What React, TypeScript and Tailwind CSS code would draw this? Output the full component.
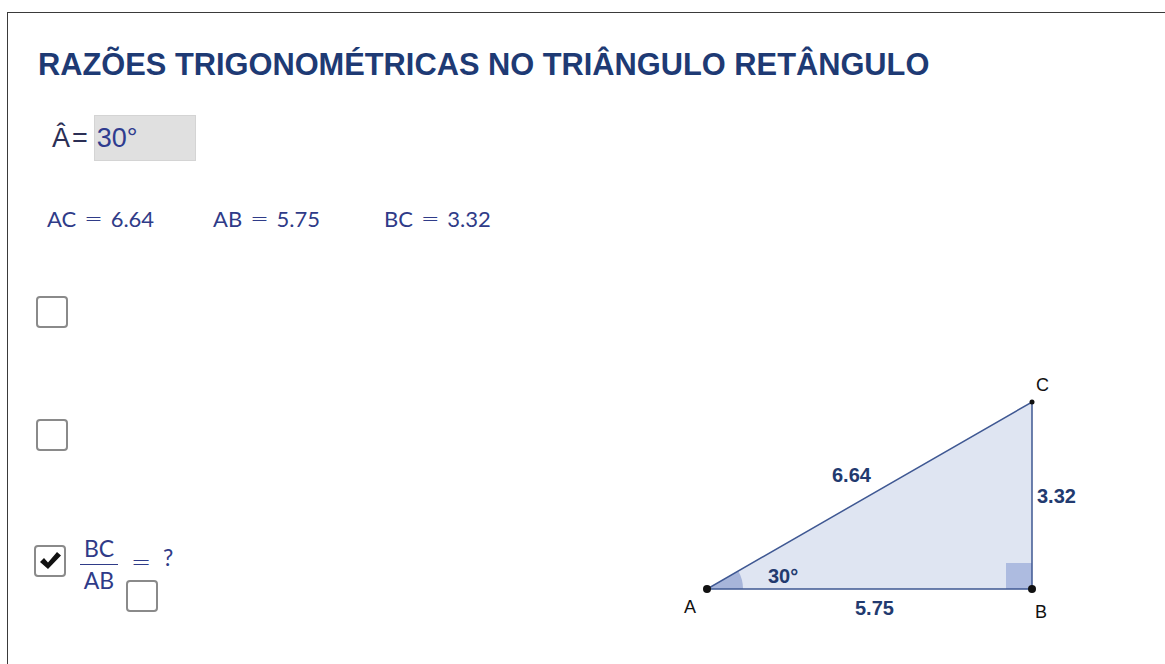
import React from "react"

const mathFont = { fontFamily: "Lato, 'Open Sans', sans-serif" }
const arial = { fontFamily: "'Liberation Sans', Arial, sans-serif" }
const eqFont = { fontFamily: "'DejaVu Sans', sans-serif", fontWeight: 300 }

function Box({ checked = false, className = "" }: { checked?: boolean; className?: string }) {
  return (
    <div
      className={
        "w-[32px] h-[32px] rounded-[4px] border-2 border-[#8a8a8a] bg-white flex items-center justify-center shrink-0 " +
        className
      }
    >
      {checked && (
        <svg width="24" height="22" viewBox="0 0 24 22">
          <path d="M2 12 L6 8 L10 12.5 L19 2 L23 5.5 L10 19 Z" fill="#111" />
        </svg>
      )}
    </div>
  )
}

function Pair({ a, b, className = "" }: { a: string; b: string; className?: string }) {
  return (
    <span className={"flex items-center " + className}>
      <span>{a}</span>
      <span className="mx-[8px] text-[22px]" style={eqFont}>=</span>
      <span>{b}</span>
    </span>
  )
}

function Triangle() {
  // canvas drawing, page coordinates
  return (
    <svg
      className="absolute left-0 top-0 pointer-events-none"
      width="1165"
      height="664"
      viewBox="0 0 1165 664"
      style={arial}
    >
      <polygon points="707,589 1032,589 1032,402" fill="#dfe5f2" stroke="none" />
      <path d="M707 589 L743 589 A36 36 0 0 0 738.3 571.1 Z" fill="#a7b5da" />
      <rect x="1006" y="563" width="26" height="26" fill="#adbbe0" />
      <polygon points="707,589 1032,589 1032,402" fill="none" stroke="#3f5893" strokeWidth="1.5" />
      <circle cx="707" cy="589" r="4" fill="#111" />
      <circle cx="1032" cy="589" r="4" fill="#111" />
      <circle cx="1032" cy="402" r="2.5" fill="#111" />
      <g fontSize="18" fill="#111">
        <text x="1036" y="391">C</text>
        <text x="684" y="613">A</text>
        <text x="1035" y="618">B</text>
      </g>
      <g fill="#223a6f" fontSize="20" fontWeight="bold">
        <text x="832" y="482">6.64</text>
        <text x="1037" y="503">3.32</text>
        <text x="768" y="583">30°</text>
        <text x="855" y="615">5.75</text>
      </g>
    </svg>
  )
}

export default function App() {
  return (
    <div className="relative w-[1165px] h-[664px] overflow-hidden bg-white">
      <div className="mt-[12px] ml-[7px] h-[652px] border-t-[1.5px] border-l-[1.5px] border-[#3a3a3a] flex flex-col items-start">
        <h1 className="ml-[30px] mt-[35px] text-[30.8px] leading-[34px] font-bold text-[#1e3a74]" style={arial}>
          RAZÕES TRIGONOMÉTRICAS NO TRIÂNGULO RETÂNGULO
        </h1>

        <div className="ml-[44px] mt-[33px] flex items-center h-[46px]" style={arial}>
          <span className="text-[27px] text-[#2b2f55] tracking-[2px] mr-[4px]">Â=</span>
          <div className="h-[46px] w-[102px] bg-[#e0e0e0] border border-[#d4d4d4] flex items-center pl-[2px]">
            <span className="text-[27px] text-[#2f3c8f]">30°</span>
          </div>
        </div>

        <div className="ml-[39px] mt-[45px] flex text-[22px] leading-[26px] text-[#2f3b88]" style={mathFont}>
          <Pair a="AC" b="6.64" className="w-[166px]" />
          <Pair a="AB" b="5.75" className="w-[171px]" />
          <Pair a="BC" b="3.32" />
        </div>

        <Box className="ml-[28px] mt-[64px]" />
        <Box className="ml-[28px] mt-[91px]" />

        <div className="ml-[26px] mt-[86px] flex items-start text-[23px] text-[#2f3b88]" style={mathFont}>
          <Box checked className="mt-[8px]" />
          <div className="ml-[14px] flex flex-col items-center">
            <span className="leading-[22px]">BC</span>
            <div className="mt-[5px] w-[38px] h-[1px] bg-[#2f3b88]" />
            <span className="mt-[4px] leading-[22px]">AB</span>
          </div>
          <div className="ml-[8px] mt-[13px] flex flex-col items-start">
            <div className="flex items-center leading-[24px]">
              <span className="ml-[5px] text-[24px]" style={eqFont}>=</span>
              <span className="ml-[12px] -mt-[10px]">?</span>
            </div>
            <Box className="mt-[6px]" />
          </div>
        </div>
      </div>
      <Triangle />
    </div>
  )
}
